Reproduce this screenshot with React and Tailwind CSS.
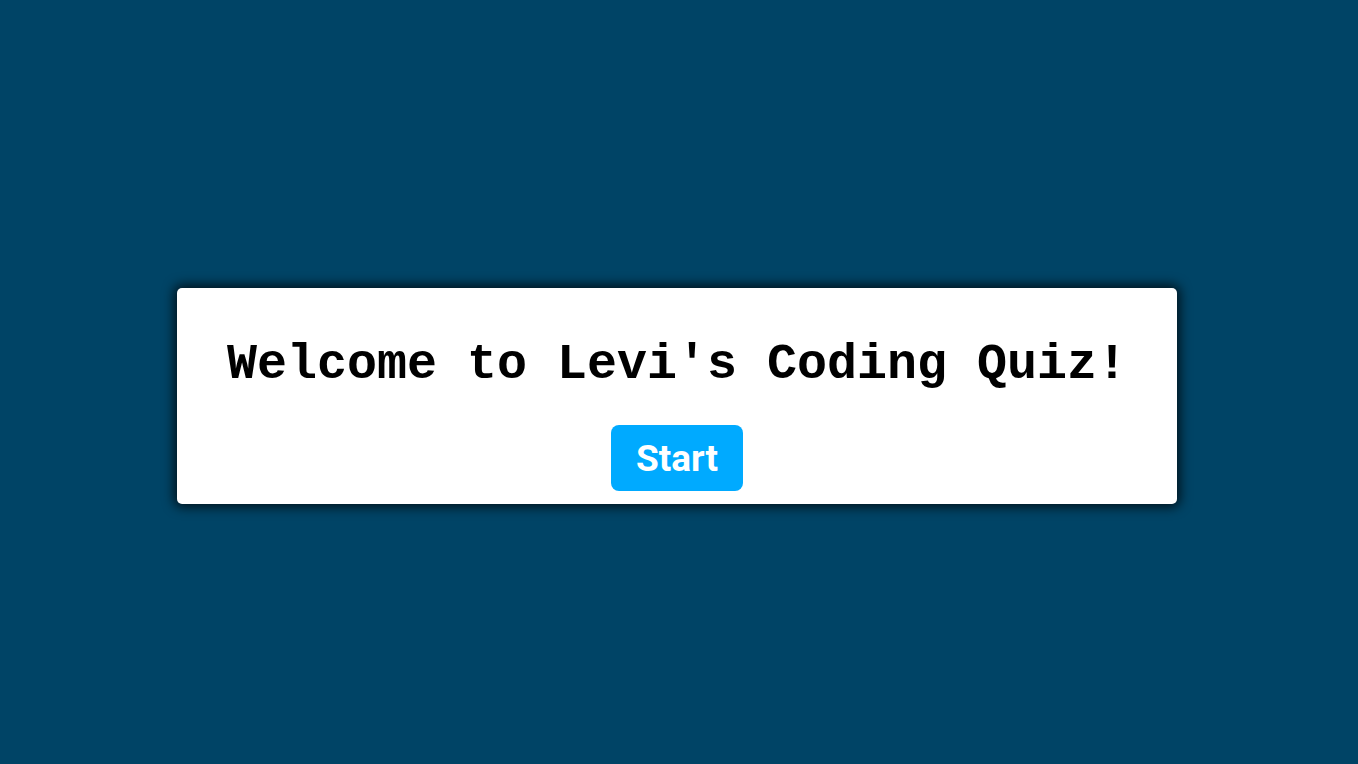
function App() {
  return (
    <div className="min-h-screen w-full bg-[#004466] flex items-center justify-center pt-[28px]">
      <div className="w-[1000px] h-[216px] mr-[4px] bg-white rounded-[5px] shadow-[0_0_12px_3px_rgba(0,0,0,0.75)] flex flex-col items-center pt-[42px]">
        <h1 className="font-['Liberation_Mono','Courier_New',monospace] font-bold text-[50px] leading-[70px] text-black">
          Welcome to Levi's Coding Quiz!
        </h1>
        <button className="mt-[25px] w-[132px] h-[66px] rounded-[8px] bg-[#00aaff] text-white font-['Roboto',sans-serif] font-bold text-[37px] leading-none">
          Start
        </button>
      </div>
    </div>
  );
}

export default App;
